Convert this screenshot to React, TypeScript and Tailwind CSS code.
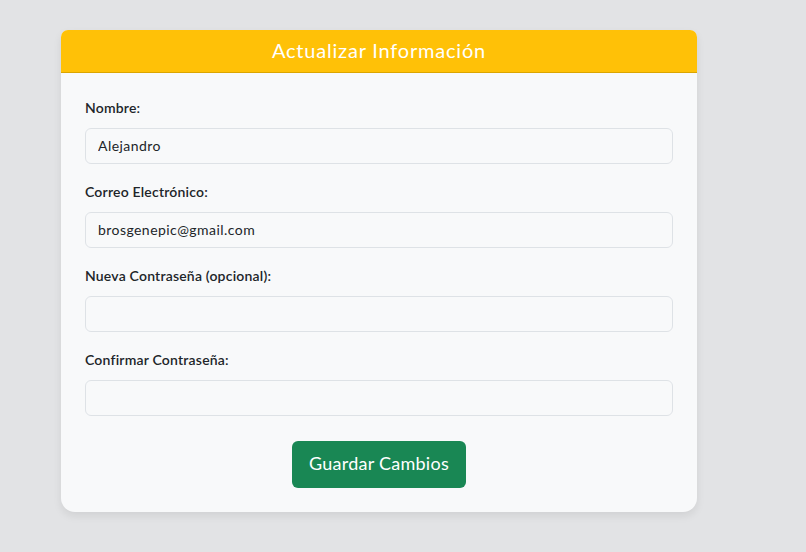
import { useState } from "react";

/**
 * App — "Actualizar Información" profile form card on a grey page.
 */
const FIELDS = [
  { id: "nombre", label: "Nombre:", type: "text", value: "Alejandro" },
  { id: "correo", label: "Correo Electrónico:", type: "email", value: "brosgenepic@gmail.com" },
  { id: "pass", label: "Nueva Contraseña (opcional):", type: "password", value: "" },
  { id: "confirm", label: "Confirmar Contraseña:", type: "password", value: "" },
];

export default function App() {
  const [values, setValues] = useState<Record<string, string>>(() =>
    Object.fromEntries(FIELDS.map((f) => [f.id, f.value]))
  );

  return (
    <div
      className="min-h-[552px] w-full bg-[#e2e3e5] pt-[30px] pl-[61px]"
      style={{ fontFamily: "Lato, 'Noto Sans', sans-serif" }}
    >
      <div className="w-[636px] overflow-hidden rounded-t-[7px] rounded-b-[14px] bg-[#f8f9fa] shadow-[0_4px_8px_rgba(0,0,0,0.08)]">
        <div className="flex h-[43px] items-center justify-center border-b border-[#dba500] bg-[#ffc107] pb-[3px] text-[20px] tracking-[0.8px] text-white">
          Actualizar Información
        </div>
        <form className="flex flex-col px-6 pt-6 pb-6" onSubmit={(e) => e.preventDefault()}>
          {FIELDS.map((f) => (
            <div key={f.id} className="mb-[17px] flex flex-col">
              <label
                htmlFor={f.id}
                className="mb-[10px] text-[14px] leading-[21px] font-semibold tracking-[0.2px] text-[#212529]"
              >
                {f.label}
              </label>
              <input
                id={f.id}
                type={f.type}
                value={values[f.id]}
                onChange={(e) => setValues((v) => ({ ...v, [f.id]: e.target.value }))}
                className="h-[36px] w-full rounded-[6px] border border-[#dee2e6] bg-[#f8f9fa] px-3 pb-[2px] text-[14px] tracking-[0.45px] text-[#212529] outline-none"
              />
            </div>
          ))}
          <div className="mt-2 flex justify-center">
            <button
              type="submit"
              className="h-[47px] w-[174px] rounded-[6px] bg-[#198754] pb-[2px] text-[18px] tracking-[0.25px] text-white"
            >
              Guardar Cambios
            </button>
          </div>
        </form>
      </div>
    </div>
  );
}
